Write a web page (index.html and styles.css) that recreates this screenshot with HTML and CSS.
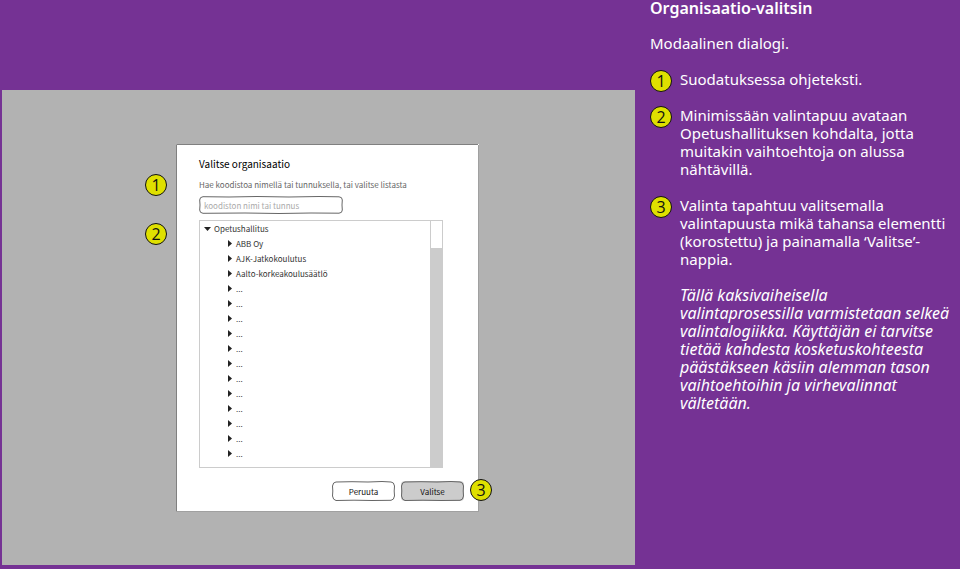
FILE: index.html
```html
<!DOCTYPE html>
<html lang="fi">
<head>
<meta charset="utf-8">
<meta name="viewport" content="width=device-width, initial-scale=1">
<title>Organisaatio-valitsin</title>
<link rel="stylesheet" href="styles.css">
</head>
<body>
<main class="stage">
  <section class="dialog" role="dialog" aria-labelledby="dialog-title">
    <svg class="sketch" viewBox="0 0 303 368" preserveAspectRatio="none" aria-hidden="true">
      <path class="edge" d="M0.500 367V0.500H302"/>
      <path class="faint" d="M302.500 1V367M0 367.500H303"/>
    </svg>
    <h2 class="dialog-title" id="dialog-title">Valitse organisaatio</h2>
    <label class="hint" for="filter">Hae koodistoa nimellä tai tunnuksella, tai valitse listasta</label>
    <div class="field">
      <input class="filter" id="filter" type="text" placeholder="koodiston nimi tai tunnus">
      <svg class="sketch" viewBox="0 0 144 18" preserveAspectRatio="none" aria-hidden="true">
        <path class="line" d="M4 0.700L30 1L58 0.500L90 1L120 0.500L140 0.800Q143.300 1 143.300 4L143 9L143.300 14Q143.300 17 140 17.200L112 17L80 17.500L46 17L4 17.300Q0.700 17 0.700 14L1 9L0.700 4Q0.700 1 4 0.700Z"/>
      </svg>
    </div>
    <div class="tree-box">
      <ul class="tree">
        <li><span class="node root"><svg class="arrow" viewBox="0 0 8 8"><path d="M1 2H8L4.500 6Z"/></svg>Opetushallitus</span>
          <ul class="branch">
            <li class="node"><svg class="arrow" viewBox="0 0 8 8"><path d="M3 0L7 3.500L3 7Z"/></svg>ABB Oy</li>
            <li class="node"><svg class="arrow" viewBox="0 0 8 8"><path d="M3 0L7 3.500L3 7Z"/></svg>AJK-Jatkokoulutus</li>
            <li class="node"><svg class="arrow" viewBox="0 0 8 8"><path d="M3 0L7 3.500L3 7Z"/></svg>Aalto-korkeakoulusäätlö</li>
            <li class="node"><svg class="arrow" viewBox="0 0 8 8"><path d="M3 0L7 3.500L3 7Z"/></svg>...</li>
            <li class="node"><svg class="arrow" viewBox="0 0 8 8"><path d="M3 0L7 3.500L3 7Z"/></svg>...</li>
            <li class="node"><svg class="arrow" viewBox="0 0 8 8"><path d="M3 0L7 3.500L3 7Z"/></svg>...</li>
            <li class="node"><svg class="arrow" viewBox="0 0 8 8"><path d="M3 0L7 3.500L3 7Z"/></svg>...</li>
            <li class="node"><svg class="arrow" viewBox="0 0 8 8"><path d="M3 0L7 3.500L3 7Z"/></svg>...</li>
            <li class="node"><svg class="arrow" viewBox="0 0 8 8"><path d="M3 0L7 3.500L3 7Z"/></svg>...</li>
            <li class="node"><svg class="arrow" viewBox="0 0 8 8"><path d="M3 0L7 3.500L3 7Z"/></svg>...</li>
            <li class="node"><svg class="arrow" viewBox="0 0 8 8"><path d="M3 0L7 3.500L3 7Z"/></svg>...</li>
            <li class="node"><svg class="arrow" viewBox="0 0 8 8"><path d="M3 0L7 3.500L3 7Z"/></svg>...</li>
            <li class="node"><svg class="arrow" viewBox="0 0 8 8"><path d="M3 0L7 3.500L3 7Z"/></svg>...</li>
            <li class="node"><svg class="arrow" viewBox="0 0 8 8"><path d="M3 0L7 3.500L3 7Z"/></svg>...</li>
            <li class="node"><svg class="arrow" viewBox="0 0 8 8"><path d="M3 0L7 3.500L3 7Z"/></svg>...</li>
          </ul>
        </li>
      </ul>
      <div class="scrollbar"><div class="thumb"></div></div>
    </div>
    <div class="actions">
      <button class="button" type="button">Peruuta
        <svg class="sketch" viewBox="0 0 63 20" preserveAspectRatio="none" aria-hidden="true"><path class="line" d="M4 1L20 0.700L36 1L50 0.500L59 1Q62 1 62.500 5L62.200 10L62.500 15Q62 19 59 19.300L40 19.500L22 19.200L4 19.500Q1 19 0.500 15L0.800 10L0.500 5Q1 1 4 1Z"/></svg>
      </button>
      <button class="button primary" type="button">Valitse
        <svg class="sketch" viewBox="0 0 63 20" preserveAspectRatio="none" aria-hidden="true"><path class="line" d="M4 1L20 0.700L36 1L50 0.500L59 1Q62 1 62.500 5L62.200 10L62.500 15Q62 19 59 19.300L40 19.500L22 19.200L4 19.500Q1 19 0.500 15L0.800 10L0.500 5Q1 1 4 1Z"/></svg>
      </button>
    </div>
    <span class="marker pin pin-filter">1</span>
    <span class="marker pin pin-tree">2</span>
    <span class="marker pin pin-select">3</span>
  </section>
</main>
<aside class="notes">
  <h1 class="notes-title">Organisaatio-valitsin</h1>
  <p class="intro">Modaalinen dialogi.</p>
  <ol class="note-list">
    <li class="note"><span class="marker">1</span><p>Suodatuksessa ohjeteksti.</p></li>
    <li class="note"><span class="marker">2</span><p>Minimissään valintapuu avataan<br>Opetushallituksen kohdalta, jotta<br>muitakin vaihtoehtoja on alussa<br>nähtävillä.</p></li>
    <li class="note"><span class="marker">3</span><div><p>Valinta tapahtuu valitsemalla<br>valintapuusta mikä tahansa elementti<br>(korostettu) ja painamalla ‘Valitse’-<br>nappia.</p>
      <p class="rationale">Tällä kaksivaiheisella<br>valintaprosessilla varmistetaan selkeä<br>valintalogiikka. Käyttäjän ei tarvitse<br>tietää kahdesta kosketuskohteesta<br>päästäkseen käsiin alemman tason<br>vaihtoehtoihin ja virhevalinnat<br>vältetään.</p></div></li>
  </ol>
</aside>
</body>
</html>
```
FILE: styles.css
```css
* { box-sizing: border-box; }

body {
  margin: 0;
  min-height: 100vh;
  display: flex;
  background: #753294;
  color: #fff;
  font-family: "Noto Sans", "Open Sans", sans-serif;
}

h1, h2, p, ul, ol { margin: 0; padding: 0; }
ul, ol { list-style: none; }

.stage {
  flex: 1;
  margin: 90px 0 4px 2px;
  padding: 54px 20px 53px 174px;
  background: #b2b2b2;
}

.dialog {
  position: relative;
  width: 100%;
  max-width: 303px;
  padding: 11px 15px 11px 23px;
  background: #fff;
  color: #333;
  font-family: "Noto Sans CJK SC", "Open Sans", sans-serif;
  font-size: 8px;
  line-height: 15px;
}

.sketch {
  position: absolute;
  inset: 0;
  width: 100%;
  height: 100%;
  fill: none;
  pointer-events: none;
}
.edge { stroke: #808080; }
.faint { stroke: #a0a0a0; }
.line { stroke: #666; }

.dialog-title {
  color: #000;
  font-size: 10px;
  font-weight: 400;
  line-height: 18px;
}

.hint {
  display: block;
  margin-top: 4px;
  color: #666;
  white-space: nowrap;
}

.field {
  position: relative;
  width: 144px;
  height: 18px;
  margin-top: 4px;
}
.filter {
  display: block;
  width: 100%;
  height: 100%;
  padding: 0 5px;
  border: 0;
  border-radius: 4px;
  background: #fff;
  font: inherit;
}
.filter::placeholder { color: #aaa; opacity: 1; }

.tree-box {
  display: flex;
  width: 244px;
  margin-top: 6px;
  border: 1px solid #ccc;
}
.tree { flex: 1; padding: 0 0 6px 3px; }
.branch { padding-left: 22px; }
.node { display: flex; align-items: center; gap: 3px; }
.arrow { width: 8px; height: 8px; fill: #222; }

.scrollbar {
  width: 12px;
  padding-top: 27px;
  border-left: 1px solid #ccc;
}
.thumb { height: 100%; background: #ccc; }

.actions {
  display: flex;
  justify-content: flex-end;
  gap: 6px;
  margin-top: 13px;
}
.button {
  position: relative;
  width: 63px;
  height: 20px;
  padding: 0;
  border: 0;
  border-radius: 4px;
  background: #fff;
  color: #111;
  font: inherit;
}
.primary { background: #ccc; }

.marker {
  flex: none;
  width: 22px;
  height: 22px;
  border: 1px solid #111;
  border-radius: 50%;
  background: #dfe000;
  color: #111;
  font-family: "Open Sans", sans-serif;
  font-size: 16px;
  line-height: 20px;
  text-align: center;
}
.pin { position: absolute; }
.pin-filter { left: -31px; top: 30px; }
.pin-tree { left: -31px; top: 79px; }
.pin-select { right: -13px; bottom: 11px; }

.notes {
  width: 325px;
  padding-left: 15px;
  font-size: 15px;
  line-height: 18px;
  white-space: nowrap;
}
.notes-title { font-size: 16px; font-weight: 600; line-height: 16px; }
.intro { margin-top: 18px; }
.note-list { display: grid; gap: 18px; margin-top: 18px; }
.note { display: flex; gap: 8px; }
.note .marker { margin-bottom: -4px; }
.rationale { margin-top: 18px; font-size: 16px; font-style: italic; }
```
